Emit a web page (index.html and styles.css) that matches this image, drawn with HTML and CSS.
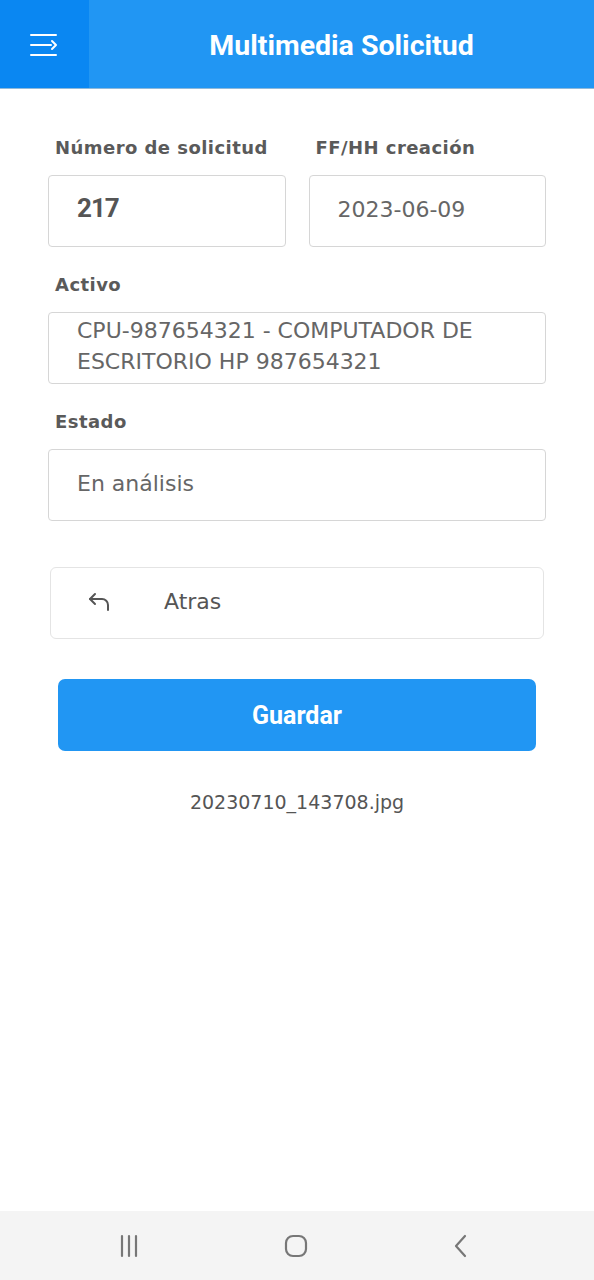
FILE: index.html
```html
<!DOCTYPE html>
<html lang="es">
<head>
<meta charset="utf-8">
<title>Multimedia Solicitud</title>
<link rel="stylesheet" href="styles.css">
</head>
<body>
<div class="screen">
  <header class="appbar">
    <button class="menu-btn" aria-label="Menú">
      <svg width="30" height="26" viewBox="0 0 30 26" fill="none" stroke="#fff" stroke-width="2" stroke-linecap="round">
        <line x1="2" y1="3" x2="27" y2="3"/>
        <line x1="2" y1="13" x2="22" y2="13"/>
        <polyline points="23,9 27,13 23,17" stroke-width="2" stroke-linejoin="round"/>
        <line x1="2" y1="23" x2="27" y2="23"/>
      </svg>
    </button>
    <h1 class="title">Multimedia Solicitud</h1>
  </header>

  <main class="content">
    <div class="row">
      <div class="field">
        <label class="label">Número de solicitud</label>
        <div class="box box-strong">217</div>
      </div>
      <div class="field">
        <label class="label">FF/HH creación</label>
        <div class="box">2023-06-09</div>
      </div>
    </div>

    <div class="field">
      <label class="label">Activo</label>
      <div class="box box-multi">CPU-987654321 - COMPUTADOR DE ESCRITORIO HP 987654321</div>
    </div>

    <div class="field">
      <label class="label">Estado</label>
      <div class="box">En análisis</div>
    </div>

    <button class="back-btn">
      <svg class="back-icon" width="26" height="26" viewBox="0 0 26 26" fill="none" stroke="#555" stroke-width="2" stroke-linecap="round" stroke-linejoin="round">
        <polyline points="8,5 3,10 8,15"/>
        <path d="M3 10 H15 a6 6 0 0 1 6 6 V21"/>
      </svg>
      <span>Atras</span>
    </button>

    <button class="save-btn">Guardar</button>

    <p class="filename">20230710_143708.jpg</p>
  </main>

  <nav class="sysnav">
    <svg width="24" height="24" viewBox="0 0 24 24" stroke="#777" stroke-width="2.2" stroke-linecap="round">
      <line x1="5" y1="2" x2="5" y2="22"/>
      <line x1="12" y1="2" x2="12" y2="22"/>
      <line x1="19" y1="2" x2="19" y2="22"/>
    </svg>
    <svg width="26" height="26" viewBox="0 0 26 26" fill="none" stroke="#777" stroke-width="2.2">
      <rect x="3" y="3" width="20" height="20" rx="7"/>
    </svg>
    <svg width="24" height="24" viewBox="0 0 24 24" fill="none" stroke="#777" stroke-width="2.2" stroke-linecap="round" stroke-linejoin="round">
      <polyline points="15,2 6,12 15,22"/>
    </svg>
  </nav>
</div>
</body>
</html>
```

FILE: styles.css
```css
* { box-sizing: border-box; }

html, body {
  margin: 0;
  padding: 0;
  background: #fff;
}

body {
  font-family: "DejaVu Sans", "Open Sans", sans-serif;
  color: #5c5c5c;
}

.screen {
  display: flex;
  flex-direction: column;
  min-height: 1280px;
}

.appbar {
  display: flex;
  height: 89px;
  background: #2196f3;
  border-bottom: 1px solid #8fb9da;
}

.menu-btn {
  width: 89px;
  height: 88px;
  border: 0;
  padding: 0;
  margin: 0;
  background: #0a87f2;
  display: flex;
  align-items: center;
  justify-content: center;
}

.menu-btn svg { margin-top: 2px; margin-right: 1px; }

.title {
  flex: 1;
  margin: 0;
  font-family: Roboto, "Liberation Sans", sans-serif;
  font-weight: 700;
  font-size: 28.5px;
  color: #fff;
  display: flex;
  align-items: center;
  justify-content: center;
  padding-top: 2px;
}

.content {
  flex: 1;
  padding: 46px 48px 0 48px;
  display: flex;
  flex-direction: column;
}

.row {
  display: flex;
  gap: 23px;
}

.row .field { flex: 1; }

.field {
  display: flex;
  flex-direction: column;
  margin-bottom: 25px;
}

.label {
  font-weight: 700;
  font-size: 18px;
  letter-spacing: 0.45px;
  line-height: 26px;
  color: #5a5a5a;
  padding-left: 7px;
  margin-bottom: 14px;
  white-space: nowrap;
}

.box {
  height: 72px;
  border: 1px solid #d6d6d6;
  border-radius: 4px;
  padding: 0 28px 4px 28px;
  display: flex;
  align-items: center;
  font-size: 22px;
  color: #666;
}

.box-strong {
  font-family: Roboto, "Liberation Sans", sans-serif;
  font-weight: 700;
  font-size: 26px;
  letter-spacing: -1px;
  color: #555;
  padding-bottom: 6px;
}

.box-multi {
  line-height: 31px;
  align-items: flex-start;
  padding-top: 2px;
  padding-right: 30px;
}

.back-btn {
  margin: 21px 2px 0 2px;
  height: 72px;
  border: 1px solid #e4e4e4;
  border-radius: 6px;
  background: #fff;
  display: flex;
  align-items: center;
  padding: 0 0 3px 36px;
  font-family: "DejaVu Sans", "Open Sans", sans-serif;
  font-size: 22px;
  color: #555;
}

.back-icon { margin-right: 51px; margin-top: 1px; }

.save-btn {
  margin: 40px 10px 0 10px;
  height: 72px;
  border: 0;
  border-radius: 7px;
  background: #2196f3;
  color: #fff;
  font-family: Roboto, "Liberation Sans", sans-serif;
  font-weight: 700;
  font-size: 25px;
}

.filename {
  margin: 38px 0 0 0;
  line-height: 26px;
  text-align: center;
  font-size: 19px;
  color: #555;
}

.sysnav {
  height: 69px;
  background: #f4f4f4;
  display: flex;
  align-items: center;
  justify-content: space-between;
  padding: 0 120px 0 117px;
}
```
